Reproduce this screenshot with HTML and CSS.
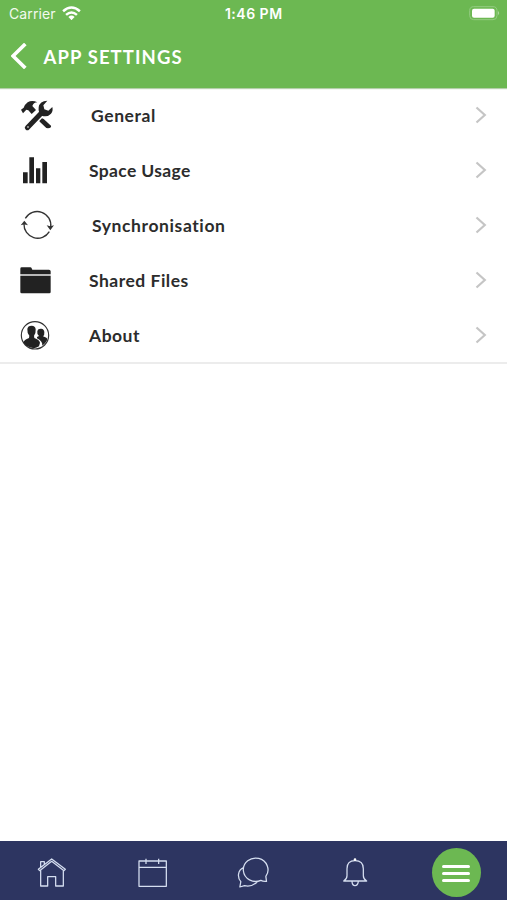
FILE: index.html
```html
<!DOCTYPE html>
<html lang="en">
<head>
<meta charset="utf-8">
<title>App Settings</title>
<link rel="stylesheet" href="styles.css">
</head>
<body>
<div class="app">
  <header class="header">
    <div class="status">
      <div class="carrier">Carrier
        <svg class="wifi" viewBox="0 0 57 44"><g fill="none" stroke="#fff" stroke-width="7.5"><path d="M3 16Q28.5-7 54 16"/><path d="M12 27Q28.5 12 45 27"/></g><path d="M19 33Q28.500 25 38 33L28.500 43Z" fill="#fff"/></svg>
      </div>
      <time class="time">1:46 PM</time>
      <div class="power"><svg class="battery" viewBox="0 0 93 45"><rect x="2" y="2" width="82" height="39" rx="12" fill="none" stroke="#93cb81" stroke-width="3"/><rect x="9" y="8" width="68" height="27" rx="6" fill="#fff"/><path d="M87 15Q94 21 87 28Z" fill="#a9d69b"/></svg></div>
    </div>
    <div class="titlebar">
      <svg class="back" viewBox="0 0 48 78"><path d="M43 3L6 39L43 75" fill="none" stroke="#fff" stroke-width="11"/></svg>
      <h1 class="title">APP SETTINGS</h1>
    </div>
  </header>
  <main class="list">
    <a class="row">
      <svg class="icon" viewBox="0 -12 180 165"><path d="M52 107L95 62" stroke="#222" stroke-width="15" stroke-linecap="round"/><path d="M112 26Q89 26 86 46Q84 63 95 71Q112 77 123 65Q130 57 127 45L115 56L103 52L100 40Z" fill="#222"/><circle cx="54" cy="105" r="2.500" fill="#fff"/><path d="M33 53L41 47Q44 38 53 31Q66 23 82 31Q70 32 67 42L78 54L65 66L55 55L49 53L39 64Z" fill="#222"/><path d="M88 87L96 79L101 81L123 101Q125 107 114 109L109 108L90 90Z" fill="#222"/></svg>
      <span class="label general">General</span><svg class="chevron" viewBox="0 0 12 18"><path d="M1.500 1.500L9.800 9L1.500 16.500"/></svg>
    </a>
    <a class="row">
      <svg class="icon" viewBox="0 -12 180 165"><path d="M39 76h14v33H39zM58 31h14v78H58zM78 64h13v45H78zM97 45h14v64H97z" fill="#222"/></svg>
      <span class="label usage">Space Usage</span><svg class="chevron" viewBox="0 0 12 18"><path d="M1.500 1.500L9.800 9L1.500 16.500"/></svg>
    </a>
    <a class="row">
      <svg class="icon" viewBox="0 -12 180 165"><g fill="none" stroke="#333" stroke-width="4"><path d="M46 49A41 41 0 0 1 122 76"/><path d="M118 89A41 41 0 0 1 42 66"/></g><path d="M43 56L54 70Q43 65 32 70ZM121 85L110 70Q121 75 132 70Z" fill="#333"/></svg>
      <span class="label sync">Synchronisation</span><svg class="chevron" viewBox="0 0 12 18"><path d="M1.500 1.500L9.800 9L1.500 16.500"/></svg>
    </a>
    <a class="row">
      <svg class="icon" viewBox="0 -12 180 165"><path d="M31 51V35Q31 31 35 31H61Q64 31 65 34L67 38H117Q122 38 122 43V51ZM31 57H122V105Q122 109 118 109H35Q31 109 31 105Z" fill="#222"/><path d="M31 54H122" stroke="#aaa" stroke-width="5"/></svg>
      <span class="label">Shared Files</span><svg class="chevron" viewBox="0 0 12 18"><path d="M1.500 1.500L9.800 9L1.500 16.500"/></svg>
    </a>
    <a class="row">
      <svg class="icon" viewBox="0 153 180 165"><circle cx="75" cy="235" r="41" fill="none" stroke="#333" stroke-width="3.500"/><path d="M40 257Q42 248 57 243L58 236Q51 228 52 216Q53 206 65 206Q76 206 77 217Q78 228 72 236L73 243Q88 248 90 257L87 268Q75 277 60 271Q48 268 40 257Z" fill="#222"/><path d="M81 240L87 237Q80 231 82 222Q84 214 94 215Q102 216 103 225Q104 234 99 238L106 241Q113 243 111 250Q106 261 97 266Q98 252 81 244Z" fill="#222"/></svg>
      <span class="label">About</span><svg class="chevron" viewBox="0 0 12 18"><path d="M1.500 1.500L9.800 9L1.500 16.500"/></svg>
    </a>
  </main>
  <nav class="nav">
    <a class="tab"><svg class="tabicon" viewBox="2 18 180 177"><path d="M54 103L94 72L135 103L131 107L94 79L58 107ZM61 104V153H82V125H106V153H129V104M61 97V80H72V88"/></svg></a>
    <a class="tab"><svg class="tabicon" viewBox="306 18 180 177"><path d="M357 78H439V154H357ZM357 97H439M378 71V87M416 71V87"/></svg></a>
    <a class="tab"><svg class="tabicon" viewBox="10.500 18 180 177"><path d="M124 136A37 35 0 1 1 139 124L141 139Q131 140 124 136ZM72 98C54 106 53 127 64 140L61 156L75 152Q98 157 115 139"/></svg></a>
    <a class="tab"><svg class="tabicon" viewBox="315 18 180 177"><path d="M371 138H440Q430 132 430 122V101Q430 77 405 77Q381 77 381 101V122Q381 132 371 138ZM396 140Q397 152 405 152Q413 152 415 140"/><circle class="knob" cx="405" cy="74" r="4"/></svg></a>
    <a class="tab"><span class="menu"><i class="bar"></i><i class="bar"></i><i class="bar"></i></span></a>
  </nav>
</div>
</body>
</html>
```

FILE: styles.css
```css
* { box-sizing: border-box; }
body { margin: 0; background: #fff; }
.app { display: flex; flex-direction: column; height: 900px; width: 507px; overflow: hidden; }
.header { height: 88px; flex: none; background: #6cb852; box-shadow: 0 1px 1px #b4cfaa; color: #fff; }
.status { display: grid; grid-template-columns: 1fr auto 1fr; height: 28px; padding: 0 7px 0 9px; align-items: center; font: 14px/28px Inter, sans-serif; }
.carrier { display: flex; align-items: center; gap: 6px; letter-spacing: .1px; color: #f2faef; }
.wifi { width: 19px; height: 14.500px; margin-top: -2px; }
.time { font-size: 14px; font-weight: 600; letter-spacing: .5px; margin-right: 1.500px; }
.power { display: flex; justify-content: flex-end; }
.battery { width: 31px; height: 15px; margin-top: -1px; }
.titlebar { display: flex; align-items: center; height: 58px; padding-left: 10.500px; gap: 17px; }
.back { width: 16px; height: 26px; margin-top: -3px; }
.title { margin: 0; font: 700 18.500px/24px Lato, sans-serif; letter-spacing: 1.1px; }
.list { flex: none; border-bottom: 2px solid #ececec; height: 276px; }
.row { display: flex; align-items: center; height: 55px; padding: 0 20px 0 10px; }
.icon { width: 60px; height: 55px; flex: none; }
.label { flex: 1; margin: 0 0 0 19px; font: 700 17.500px/25px Lato, sans-serif; letter-spacing: .5px; color: #2c2c2c; }
.general { margin-left: 21px; letter-spacing: .6px; }
.usage { letter-spacing: .35px; }
.sync { margin-left: 22px; letter-spacing: .6px; }
.chevron { width: 12px; height: 18px; margin: -1px 0 0; fill: none; stroke: #c5c5c5; stroke-width: 2.200; }
.nav { display: grid; grid-template-columns: repeat(5, 1fr); height: 59px; margin-top: auto; background: #2d3561; }
.tab { display: flex; align-items: center; justify-content: center; }
.tabicon { width: 60px; height: 59px; fill: none; stroke: #d5def0; stroke-width: 3.800; stroke-linejoin: round; }
.knob { fill: #fff; stroke: none; }
.menu { display: flex; flex-direction: column; align-items: center; justify-content: center; gap: 4px; width: 49px; height: 49px; margin-top: 4px; padding-top: 2px; border-radius: 50%; background: #6cb852; }
.bar { width: 28px; height: 2.700px; border-radius: 2px; background: #fff; }
```
